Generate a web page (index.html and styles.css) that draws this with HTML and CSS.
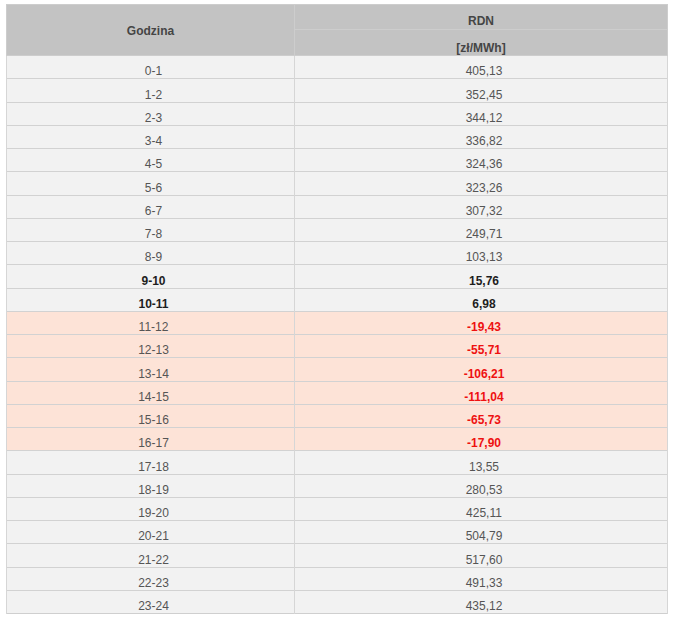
FILE: index.html
```html
<!DOCTYPE html>
<html lang="pl">
<head>
<meta charset="utf-8">
<link rel="stylesheet" href="styles.css">
</head>
<body>
<div class="wrap">
<table class="prices">
<thead>
<tr><th rowspan="2" class="col-h">Godzina</th><th class="top">RDN</th></tr>
<tr><th class="unit">[zł/MWh]</th></tr>
</thead>
<tbody>
<tr><td>0-1</td><td>405,13</td></tr>
<tr><td>1-2</td><td>352,45</td></tr>
<tr><td>2-3</td><td>344,12</td></tr>
<tr><td>3-4</td><td>336,82</td></tr>
<tr><td>4-5</td><td>324,36</td></tr>
<tr><td>5-6</td><td>323,26</td></tr>
<tr><td>6-7</td><td>307,32</td></tr>
<tr><td>7-8</td><td>249,71</td></tr>
<tr><td>8-9</td><td>103,13</td></tr>
<tr class="strong"><td>9-10</td><td>15,76</td></tr>
<tr class="strong"><td>10-11</td><td>6,98</td></tr>
<tr class="neg"><td>11-12</td><td>-19,43</td></tr>
<tr class="neg"><td>12-13</td><td>-55,71</td></tr>
<tr class="neg"><td>13-14</td><td>-106,21</td></tr>
<tr class="neg"><td>14-15</td><td>-111,04</td></tr>
<tr class="neg"><td>15-16</td><td>-65,73</td></tr>
<tr class="neg"><td>16-17</td><td>-17,90</td></tr>
<tr><td>17-18</td><td>13,55</td></tr>
<tr><td>18-19</td><td>280,53</td></tr>
<tr><td>19-20</td><td>425,11</td></tr>
<tr><td>20-21</td><td>504,79</td></tr>
<tr><td>21-22</td><td>517,60</td></tr>
<tr><td>22-23</td><td>491,33</td></tr>
<tr><td>23-24</td><td>435,12</td></tr>
</tbody>
</table>
</div>
</body>
</html>
```

FILE: styles.css
```css
html, body {
  margin: 0;
  padding: 0;
  background: #ffffff;
}
.wrap {
  padding: 4px 5px 0 6px;
}
.prices {
  width: 662px;
  border-collapse: collapse;
  font-family: "Liberation Sans", Arial, sans-serif;
  font-size: 12px;
  color: #555555;
  border: 1px solid #cfcfcf;
}
.prices th {
  background: #c3c3c3;
  color: #454545;
  font-weight: bold;
  text-align: center;
  padding: 0;
  border: 1px solid #cdcdcd;
}
.prices th.col-h {
  width: 287px;
  height: 48px;
  vertical-align: middle;
  padding-top: 1px;
}
.prices th.top {
  height: 23px;
  vertical-align: bottom;
  padding-bottom: 1px;
}
.prices th.unit {
  height: 25px;
  vertical-align: bottom;
  padding-bottom: 0;
}
.prices td {
  height: 22.25px;
  padding: 0 0 0 6px;
  text-align: center;
  vertical-align: bottom;
  line-height: 14px;
  background: #f2f2f2;
  border-top: 1px solid #d2d2d2;
  border-left: 1px solid #d6d6d6;
  border-right: 1px solid #d6d6d6;
}
.prices tr.strong td {
  color: #1e1e1e;
  font-weight: bold;
}
.prices tr.neg td {
  background: #fde3d7;
}
.prices tr.neg td:last-child {
  color: #ee1111;
  font-weight: bold;
}
```
